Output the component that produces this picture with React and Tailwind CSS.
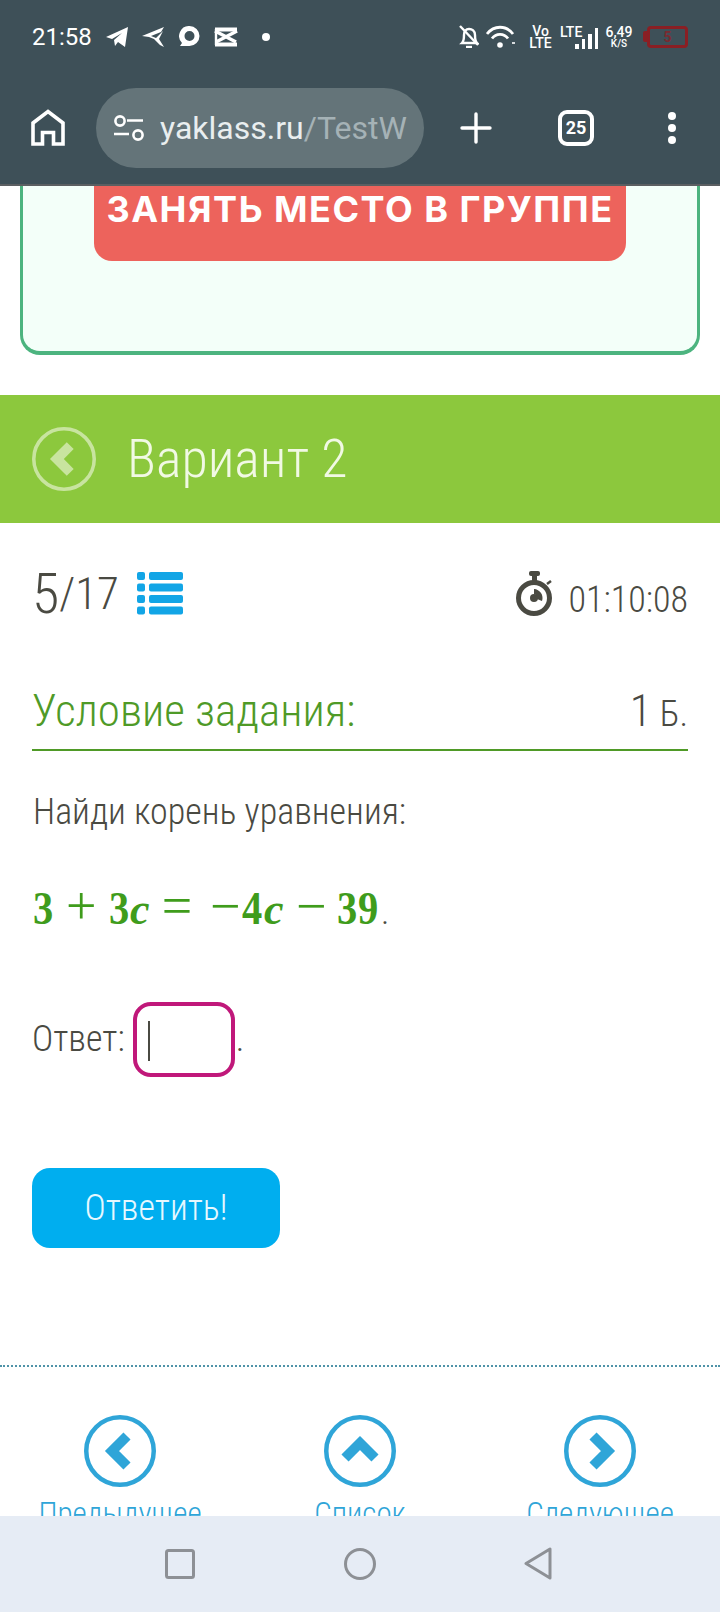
import React from "react";

const W = "#ffffff";

function StatusIcons() {
  return (
    <>
      <svg width="22" height="20" viewBox="0 0 22 20" className="ml-[16px]"><path d="M0 10 22 0 19 20 12 15 9 19 8 13 16 6 6 12Z" fill={W} /></svg>
      <svg width="23" height="20" viewBox="0 0 23 20" className="ml-[14px]"><path d="M0 9 22 0 19 5 9 9 14 11 21 4 17 12 22 20 18 18 12 12 7 10Z" fill={W} /></svg>
      <svg width="21" height="21" viewBox="0 0 21 21" className="ml-[14px]"><path d="M10.5 0a10 10 0 0 1 0 20H1l2-3A10 10 0 0 1 10.5 0Zm0 5a5 5 0 1 0 0 10 5 5 0 0 0 0-10Z" fill={W} fillRule="evenodd" /></svg>
      <svg width="24" height="20" viewBox="0 0 24 20" fill="none" stroke={W} className="ml-[14px]">
        <path d="M1 2.500H23" strokeWidth="4" />
        <path d="M1 17.500H23" strokeWidth="4" />
        <path d="M1 4 22 15M23 4 2 15" strokeWidth="3.4" />
        <path d="M2 2V18" strokeWidth="2.4" />
      </svg>
      <div className="ml-[24px] w-[8px] h-[8px] rounded-full bg-white" />
    </>
  );
}

function StatusRight() {
  return (
    <div className="ml-auto flex items-center">
      <svg width="20" height="23" viewBox="0 0 20 23" fill="none" stroke={W} strokeWidth="2.4">
        <path d="M3 18c2-2 2-4 2-8 0-4 2-6 5-6s6 2 6 6c0 3 0 6 2 8Z" />
        <path d="M1 1 19 20" />
        <path d="M7 22h6" />
      </svg>
      <svg width="30" height="23" viewBox="0 0 30 23" fill="none" stroke={W} strokeWidth="2.8" className="ml-[7px]">
        <path d="M1 9C8 0 20 0 27 9" />
        <path d="M6 13.500C10 8 18 8 22 13.500" />
        <circle cx="14" cy="20" r="2.800" fill={W} stroke="none" />
        <path d="M26 18h3" strokeWidth="1.600" />
      </svg>
      <div className="ml-[14px] w-[21px] flex flex-col items-center text-white text-[14px] leading-[12px] font-medium">
        <span>Vo</span><span>LTE</span>
      </div>
      <div className="ml-[9px] h-[24px] relative w-[38px]">
        <span className="text-white text-[14px] leading-[14px] font-medium block">LTE</span>
        <div className="absolute right-0 bottom-0 flex items-end gap-[3px]">
          <div className="w-[3.5px] h-[5px] bg-white" />
          <div className="w-[3.5px] h-[10px] bg-white" />
          <div className="w-[3.5px] h-[15px] bg-white" />
          <div className="w-[3.5px] h-[21px] bg-white" />
        </div>
      </div>
      <div className="ml-[7px] w-[28px] flex flex-col items-center text-white font-medium">
        <span className="text-[14px] leading-[13px]">6,49</span>
        <span className="text-[10px] leading-[9px]">K/S</span>
      </div>
      <div className="ml-[10px] w-[4px] h-[11px] bg-[#8a1f24] rounded-l-[2px]" />
      <div className="w-[41px] h-[22px] border-[3px] border-[#8a1f24] rounded-[4px] flex items-center justify-center text-[#7a2a30] text-[14px] leading-none font-bold">5</div>
    </div>
  );
}

function Toolbar() {
  return (
    <div className="h-[96px] flex items-start pt-[16px]">
      <svg width="34" height="38" viewBox="0 0 34 38" fill="none" stroke={W} strokeWidth="3.6" className="ml-[31px] mt-[21px]">
        <path d="M2 35V14L17 2.500 32 14V35H22.500V23.500H11.500V35Z" />
      </svg>
      <div className="ml-[31px] w-[328px] h-[80px] rounded-full bg-[#647479] flex items-center overflow-hidden pr-[17px]">
        <svg width="31" height="26" viewBox="0 0 31 26" fill="none" stroke={W} strokeWidth="2.6" className="ml-[17px] shrink-0">
          <circle cx="7" cy="6" r="4.600" />
          <path d="M14 5.500H30" />
          <path d="M1 19H16" />
          <circle cx="25" cy="20" r="4.600" />
        </svg>
        <div className="ml-[16px] overflow-hidden whitespace-nowrap text-[32px] leading-[40px] font-['Roboto',sans-serif]">
          <span className="text-[#e9eeef]">yaklass.ru</span><span className="text-[#a5b2b6]">/TestW</span>
        </div>
      </div>
      <svg width="32" height="32" viewBox="0 0 32 32" stroke={W} strokeWidth="3.4" strokeLinecap="round" className="ml-[36px] mt-[24px]">
        <path d="M16 2V30M2 16H30" />
      </svg>
      <div className="ml-[66px] mt-[22px] w-[36px] h-[36px] border-[4px] border-white rounded-[9px] flex items-center justify-center text-white text-[18px] font-bold leading-none">25</div>
      <div className="ml-[74px] mt-[24px] flex flex-col gap-[4px]">
        <div className="w-[8px] h-[8px] rounded-full bg-white" />
        <div className="w-[8px] h-[8px] rounded-full bg-white" />
        <div className="w-[8px] h-[8px] rounded-full bg-white" />
      </div>
    </div>
  );
}

function Chevron({ dir, color, size, stroke, width }) {
  const pts = {
    left: "43,21 28,36 43,51",
    right: "29,21 44,36 29,51",
    up: "21,43 36,28 51,43",
  }[dir];
  return (
    <svg width={size} height={size} viewBox="0 0 72 72" fill="none" className="shrink-0">
      <circle cx="36" cy="36" r={36 - stroke / 2} stroke={color} strokeWidth={stroke} />
      <polyline points={pts} stroke={color} strokeWidth={width} strokeLinejoin="miter" />
    </svg>
  );
}

function Equation() {
  const d = "font-['Liberation_Serif',serif] font-bold text-[46px] leading-none scale-x-[0.88] origin-left";
  const o = "font-['Liberation_Serif',serif] font-normal text-[54px] leading-none";
  const c = "font-['Liberation_Serif',serif] font-bold italic text-[44px] leading-none";
  return (
    <div className="flex items-baseline text-[#3f9c1c] whitespace-nowrap [font-stretch:100%]">
      <span className={d + " w-[20px]"}>3</span>
      <span className={o + " ml-[13px] w-[30px] text-center"}>+</span>
      <span className={d + " ml-[13px] w-[20px]"}>3</span>
      <span className={c + " ml-[1px] w-[19px]"}>c</span>
      <span className={o + " ml-[12px] w-[32px] text-center"}>=</span>
      <span className={o + " ml-[17px] w-[30px] text-center"}>−</span>
      <span className={d + " ml-[2px] w-[21px]"}>4</span>
      <span className={c + " ml-[1px] w-[19px]"}>c</span>
      <span className={o + " ml-[13px] w-[28px] text-center"}>−</span>
      <span className={d + " ml-[13px] w-[21px]"}>3</span>
      <span className={d + " w-[21px]"}>9</span>
      <span className="font-['Roboto',sans-serif] font-light text-[#4a4a42] text-[35px] leading-none ml-[2px]">.</span>
    </div>
  );
}

export default function App() {
  return (
    <div className="w-[720px] h-[1612px] flex flex-col bg-white overflow-hidden font-['Roboto',sans-serif] font-light [font-stretch:85%]">
      <header className="shrink-0 h-[186px] bg-[#3e5058] border-b-2 border-[#5b5f62] font-normal [font-stretch:100%]">
        <div className="h-[72px] flex items-center pl-[32px] pr-[32px] pt-[1px]">
          <span className="text-white text-[24px] leading-none w-[58px]">21:58</span>
          <StatusIcons />
          <StatusRight />
        </div>
        <Toolbar />
      </header>

      <main className="flex-1 min-h-0 overflow-hidden">
        <div className="mx-[20px] h-[169px] bg-[#f3fff9] border-x-[3px] border-b-[4px] border-[#4cb47f] rounded-b-[20px] overflow-hidden">
          <div className="ml-[71px] w-[532px] h-[75px] bg-[#ed635c] rounded-b-[18px] flex justify-center pt-[2px]">
            <span className="text-white font-['Inter',sans-serif] font-bold [font-stretch:100%] text-[36px] leading-[42px] tracking-[1.5px] whitespace-nowrap">ЗАНЯТЬ МЕСТО В ГРУППЕ</span>
          </div>
        </div>

        <div className="mt-[40px] h-[128px] bg-[#8cc83d] flex items-center pl-[32px]">
          <Chevron dir="left" color="#c8e49f" size={64} stroke={4} width={11} />
          <span className="ml-[31px] text-[#f1f9e4] text-[54px] leading-none">Вариант 2</span>
        </div>

        <div className="px-[32px]">
          <div className="flex items-start h-[106px] pt-[43px] text-[#4a4a42]">
            <span className="text-[56px] leading-[56px]">5</span>
            <span className="text-[45px] leading-[56px]">/17</span>
            <svg width="46" height="43" viewBox="0 0 46 43" fill="#12a5e6" className="ml-[18px] mt-[6px]">
              <rect x="0" y="0" width="8" height="8" rx="2" /><rect x="12" y="0" width="34" height="8" rx="2" />
              <rect x="0" y="11.5" width="8" height="8" rx="2" /><rect x="12" y="11.5" width="34" height="8" rx="2" />
              <rect x="0" y="23" width="8" height="8" rx="2" /><rect x="12" y="23" width="34" height="8" rx="2" />
              <rect x="0" y="34.5" width="8" height="8" rx="2" /><rect x="12" y="34.5" width="34" height="8" rx="2" />
            </svg>
            <svg width="38" height="46" viewBox="0 0 38 46" fill="none" className="ml-auto mt-[5px]">
              <circle cx="18" cy="27" r="15.500" stroke="#4a4a42" strokeWidth="5" />
              <rect x="13" y="0" width="11" height="5" rx="2" fill="#4a4a42" />
              <rect x="16" y="5" width="5" height="6" fill="#4a4a42" />
              <path d="M31 13l4-3" stroke="#4a4a42" strokeWidth="2.500" />
              <circle cx="18" cy="27" r="4" fill="#4a4a42" />
              <path d="M18 18a9 9 0 0 1 8 12l-5-2a4 4 0 0 0-3-5Z" fill="#4a4a42" />
            </svg>
            <span className="ml-[14px] mt-[16px] text-[36px] leading-[36px]">01:10:08</span>
          </div>

          <div className="h-[122px] pt-[56px] flex items-start justify-between border-b-2 border-[#4f9a27]">
            <span className="text-[#4f9a27] text-[45px] leading-[52px]">Условие задания:</span>
            <span className="text-[#4a4a42] leading-[52px]"><span className="text-[45px]">1</span><span className="text-[36px] ml-[8px]">Б.</span></span>
          </div>

          <p className="mt-[40px] ml-[1px] text-[#4a4a42] text-[36px] leading-[42px]">Найди корень уравнения:</p>

          <div className="mt-[46px] ml-[1px] h-[44px]"><Equation /></div>

          <div className="mt-[79px] flex items-end h-[75px] text-[#4a4a42] text-[36px]">
            <span className="leading-[42px] mb-[17px]">Ответ:</span>
            <div className="ml-[8px] w-[102px] h-[75px] border-[4px] border-[#c0187a] rounded-[18px] flex items-center pl-[11px]">
              <div className="w-[2px] h-[40px] bg-[#4a4a42] mt-[2px]" />
            </div>
            <span className="leading-[42px] mb-[17px] ml-[1px]">.</span>
          </div>

          <button className="mt-[91px] block w-[248px] h-[80px] rounded-[18px] bg-[#00aeef] text-[#e6f8ff] text-[36px] leading-none">Ответить!</button>
        </div>

        <div className="mt-[117px] border-t-2 border-dotted border-[#4f93a8]" />

        <div className="mt-[48px] grid grid-cols-3 text-[#2fa5d8] text-[31px] leading-[40px] text-center">
          <div className="flex flex-col items-center gap-[7px]">
            <Chevron dir="left" color="#2fa5d8" size={72} stroke={4.5} width={10} />
            <span>Предыдущее</span>
          </div>
          <div className="flex flex-col items-center gap-[7px]">
            <Chevron dir="up" color="#2fa5d8" size={72} stroke={4.5} width={10} />
            <span>Список</span>
          </div>
          <div className="flex flex-col items-center gap-[7px]">
            <Chevron dir="right" color="#2fa5d8" size={72} stroke={4.5} width={10} />
            <span>Следующее</span>
          </div>
        </div>
      </main>

      <nav className="shrink-0 h-[96px] bg-[#e6ecf5] flex items-center pb-[1px]">
        <svg width="30" height="30" viewBox="0 0 30 30" fill="none" stroke="#8d9095" strokeWidth="3" className="ml-[165px]"><rect x="1.5" y="1.5" width="27" height="27" rx="2" /></svg>
        <svg width="32" height="32" viewBox="0 0 32 32" fill="none" stroke="#8d9095" strokeWidth="3" className="ml-[149px]"><circle cx="16" cy="16" r="14.500" /></svg>
        <svg width="28" height="33" viewBox="0 0 28 33" fill="none" stroke="#8d9095" strokeWidth="3" strokeLinejoin="round" className="ml-[148px]"><path d="M26 2V31L2 16.500Z" /></svg>
      </nav>
    </div>
  );
}
